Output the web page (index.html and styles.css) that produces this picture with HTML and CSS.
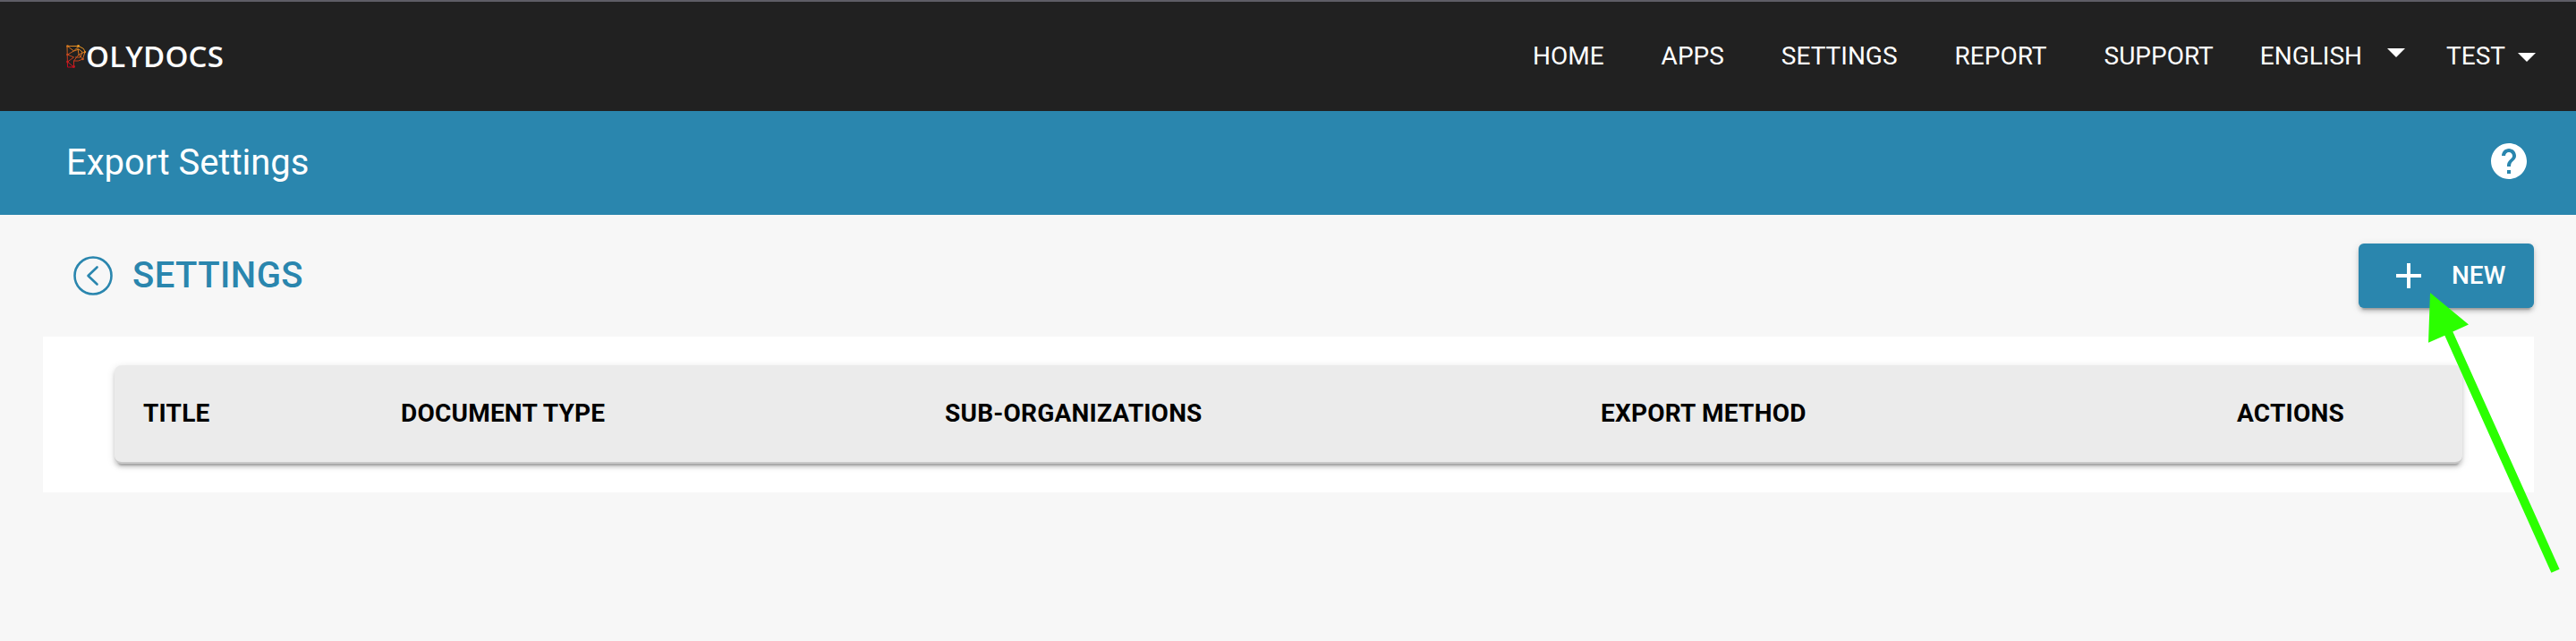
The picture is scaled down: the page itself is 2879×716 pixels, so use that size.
FILE: index.html
```html
<!DOCTYPE html>
<html lang="en">
<head>
<meta charset="utf-8">
<title>Polydocs – Export Settings</title>
<link rel="stylesheet" href="styles.css">
</head>
<body>
<header class="topbar">
  <a class="logo">
    <svg class="logo-mark" viewBox="0 0 22 26" width="22" height="26">
      <defs>
        <linearGradient id="mark" gradientUnits="userSpaceOnUse" x1="16" y1="0" x2="4" y2="26">
          <stop offset="0" stop-color="#f5a623"/>
          <stop offset=".45" stop-color="#c65a1e"/>
          <stop offset="1" stop-color="#c8001e"/>
        </linearGradient>
      </defs>
      <g fill="none" stroke="url(#mark)" stroke-width="1">
        <path d="M1 1.500H14L19.500 4.500L21 8L18.500 16L13.500 18H8.500V25H1.500Z"/>
        <path d="M1.500 1.500L8.500 7L14 1.500M8.500 7L1.500 11L8.500 14L1.500 19L8.500 25M8.500 18L14 11L21 8M14 11L13 4M14 11L18.500 16M8.500 7L14 5L18 8L16 14L10 14"/>
      </g>
      <g fill="url(#mark)"><circle cx="1.500" cy="1.500" r="1.300"/><circle cx="13.500" cy="1.500" r="1.400"/><circle cx="21" cy="8" r="1.200"/><circle cx="18.500" cy="16" r="1.300"/><circle cx="1.500" cy="11" r="1.300"/><circle cx="1.500" cy="19" r="1.300"/><circle cx="8.500" cy="24.500" r="1.400"/></g>
    </svg>
    <span class="logo-text">OLYDOCS</span>
  </a>
  <nav class="nav">
    <a>HOME</a>
    <a>APPS</a>
    <a>SETTINGS</a>
    <a>REPORT</a>
    <a>SUPPORT</a>
    <a class="language">ENGLISH<i class="caret caret-high"></i></a>
    <a class="user">TEST<i class="caret"></i></a>
  </nav>
</header>
<section class="titlebar">
  <h1>Export Settings</h1>
  <svg class="help" viewBox="0 0 24 24" width="48" height="48"><path fill="#fff" d="M12 2C6.480 2 2 6.480 2 12s4.480 10 10 10 10-4.480 10-10S17.520 2 12 2zm1 17h-2v-2h2v2zm2.070-7.750l-.9.920C13.450 12.900 13 13.500 13 15h-2v-.5c0-1.100.45-2.100 1.170-2.830l1.240-1.260c.37-.36.590-.86.590-1.410 0-1.100-.9-2-2-2s-2 .9-2 2H8c0-2.210 1.790-4 4-4s4 1.790 4 4c0 .88-.36 1.680-.93 2.250z"/></svg>
</section>
<main class="content">
  <div class="toolbar">
    <a class="back">
      <svg viewBox="0 0 44 44" width="44" height="44" fill="none" stroke="#2a86ae"><circle cx="22" cy="22" r="20.500" stroke-width="2.600"/><path d="M26.500 12.500L16.500 22L26.500 31.500" stroke-width="2.600" stroke-linecap="round" stroke-linejoin="round"/></svg>
      <span>SETTINGS</span>
    </a>
    <button class="new">
      <svg viewBox="0 0 28 28" width="28" height="28" fill="#fff"><path d="M12 0h4v12h12v4H16v12h-4V16H0v-4h12z"/></svg>
      <span>NEW</span>
    </button>
  </div>
  <div class="panel">
    <div class="table-head">
      <span>TITLE</span>
      <span>DOCUMENT TYPE</span>
      <span>SUB-ORGANIZATIONS</span>
      <span>EXPORT METHOD</span>
      <span>ACTIONS</span>
    </div>
  </div>
</main>
<svg class="pointer" viewBox="0 0 150 316" width="150" height="316"><path fill="#2bff00" d="M4 0L47 35.500L29.300 43.500L148.600 308.700L139.400 312.700L20.300 47.800L2 55.700Z"/></svg>
</body>
</html>
```
FILE: styles.css
```css
* { box-sizing: border-box; }

body {
  margin: 0;
  min-height: 716px;
  background: #f7f7f7;
  font-family: Roboto, sans-serif;
  font-size: 28px;
  overflow: hidden;
}

.topbar {
  height: 124px;
  padding: 0 45px 0 74px;
  border-top: 2px solid #5f5e66;
  background: #212121;
  color: #fff;
  display: flex;
  justify-content: space-between;
  align-items: center;
}

.logo { display: flex; align-items: center; }

.logo-text {
  font: 600 33px/40px "Open Sans", sans-serif;
  letter-spacing: .2px;
}

.nav {
  display: flex;
  gap: 64px;
  line-height: 40px;
}

.language, .user { display: flex; align-items: center; }
.language { margin-left: -12px; gap: 28px; }
.user { margin-left: -18px; gap: 14px; }

.caret {
  border: 10px solid transparent;
  border-top-color: #fff;
  border-bottom: 0;
  margin-top: 2px;
}
.caret-high { margin-top: -8px; }

.titlebar {
  height: 116px;
  padding: 0 51px 2px 74px;
  background: #2a86ae;
  color: #fff;
  display: flex;
  justify-content: space-between;
  align-items: center;
}

h1 { margin: 0; font-size: 40px; font-weight: 400; }

.help { margin-bottom: 2px; }

.content { padding: 32px 47px 0 48px; }

.toolbar {
  height: 72px;
  padding-left: 34px;
  display: flex;
  justify-content: space-between;
  align-items: center;
}

.back {
  display: flex;
  align-items: center;
  gap: 22px;
  color: #2a86ae;
  font-size: 40px;
  font-weight: 500;
  letter-spacing: .45px;
}
.back span { padding-bottom: 2px; }

.new {
  width: 196px;
  height: 72px;
  padding: 0 0 0 42px;
  border: 0;
  border-radius: 6px;
  background: #2a86ae;
  color: #fff;
  font: 500 28px Roboto, sans-serif;
  display: flex;
  align-items: center;
  gap: 34px;
  box-shadow: 0 6px 2px -4px rgba(0,0,0,.2), 0 4px 4px rgba(0,0,0,.14), 0 2px 10px rgba(0,0,0,.12);
}
.new span { padding-bottom: 2px; }

.panel {
  height: 174px;
  margin-top: 32px;
  padding: 32px 80px;
  background: #fff;
}

.table-head {
  height: 110px;
  padding: 0 0 2px 32px;
  border-bottom: 2px solid #c9c9c9;
  border-radius: 8px;
  background: #ebebeb;
  color: #000;
  font-weight: 700;
  letter-spacing: .22px;
  display: grid;
  grid-template-columns: 288px 608px 733px 711px 1fr;
  align-items: center;
  box-shadow: 0 6px 2px -4px rgba(0,0,0,.2), 0 4px 4px rgba(0,0,0,.14), 0 2px 10px rgba(0,0,0,.12);
}

/* Callout arrow drawn over the page, pointing at the NEW button */
.pointer { position: absolute; left: 2712px; top: 327px; }
```
